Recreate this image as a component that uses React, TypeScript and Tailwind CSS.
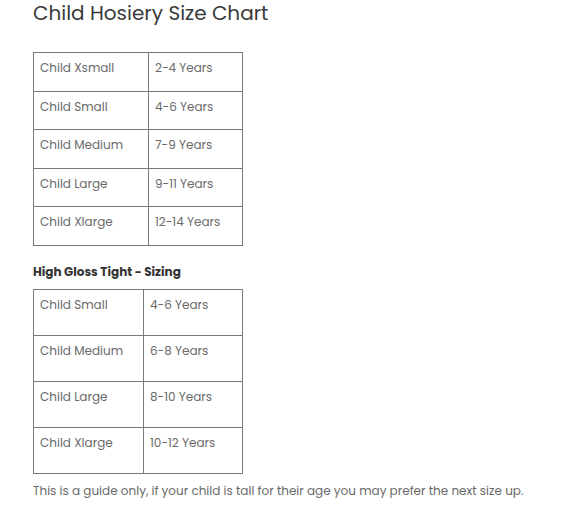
const chart1 = [
  ["Child Xsmall", "2-4 Years"],
  ["Child Small", "4-6 Years"],
  ["Child Medium", "7-9 Years"],
  ["Child Large", "9-11 Years"],
  ["Child Xlarge", "12-14 Years"],
];

const chart2 = [
  ["Child Small", "4-6 Years"],
  ["Child Medium", "6-8 Years"],
  ["Child Large", "8-10 Years"],
  ["Child Xlarge", "10-12 Years"],
];

function SizeTable({ rows, rowH, col1 }: { rows: string[][]; rowH: string; col1: string }) {
  return (
    <table className="w-[210px] border-collapse border border-[#7a7a7a] text-[12px] leading-5 text-[#6a6a6a]">
      <tbody>
        {rows.map(([size, age]) => (
          <tr key={size} className={rowH}>
            <td className={`${col1} border border-[#7a7a7a] px-[6px] pt-[5px] align-top`}>{size}</td>
            <td className="border border-[#7a7a7a] px-[6px] pt-[5px] align-top">{age}</td>
          </tr>
        ))}
      </tbody>
    </table>
  );
}

export default function App() {
  return (
    <div className="min-h-screen bg-white pl-[33px] font-['Poppins','Open_Sans',sans-serif]">
      <h1 className="pt-0 text-[20px] leading-[26px] text-[#3a3a3a]">Child Hosiery Size Chart</h1>
      <div className="mt-[26px]">
        <SizeTable rows={chart1} rowH="h-[38.6px]" col1="w-[115px]" />
      </div>
      <h2 className="mt-[16px] text-[12px] font-bold leading-5 text-[#333]">High Gloss Tight - Sizing</h2>
      <div className="mt-[7px]">
        <SizeTable rows={chart2} rowH="h-[46px]" col1="w-[110px]" />
      </div>
      <p className="mt-[7px] text-[12px] leading-5 text-[#6a6a6a]">
        This is a guide only, if your child is tall for their age you may prefer the next size up.
      </p>
    </div>
  );
}
